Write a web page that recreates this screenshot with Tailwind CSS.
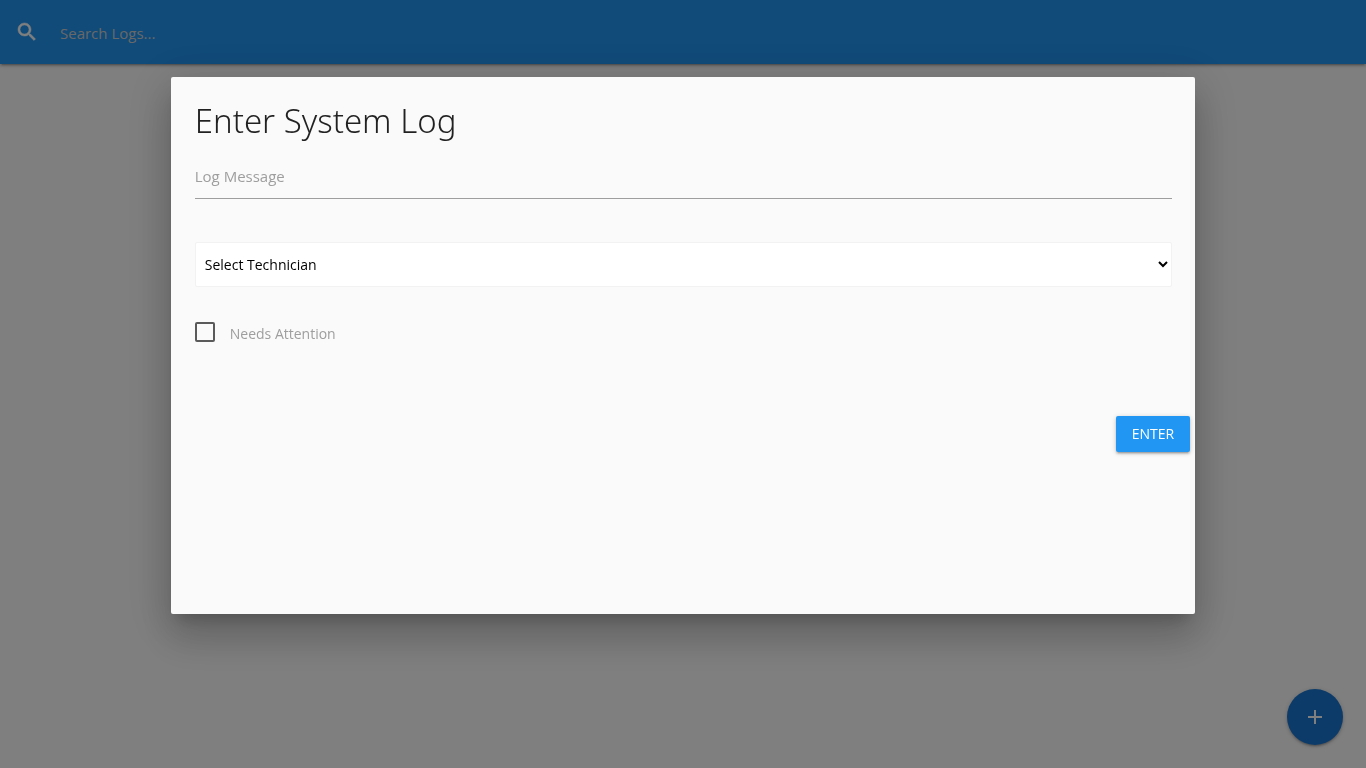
<!DOCTYPE html>
<html lang="en">
<head>
<meta charset="utf-8">
<meta name="viewport" content="width=device-width, initial-scale=1">
<title>System Logs</title>
<script src="https://cdn.jsdelivr.net/npm/@tailwindcss/browser@4"></script>
</head>
<body class="min-h-screen overflow-hidden bg-white font-['Segoe_UI','Open_Sans',sans-serif] text-sm text-black/87">
  <nav class="h-16 bg-[#2196f3] shadow-[0_2px_2px_0_rgba(0,0,0,0.14),0_3px_1px_-2px_rgba(0,0,0,0.12),0_1px_5px_0_rgba(0,0,0,0.2)]">
    <form class="flex h-full items-center gap-[21px] pl-[15px]">
      <label for="search" aria-label="Search" class="text-white">
        <svg class="size-6" viewBox="0 0 24 24" fill="currentColor" stroke="currentColor" stroke-width=".5"><path d="M15.5 14h-.79l-.28-.27C15.41 12.59 16 11.11 16 9.5 16 5.91 13.09 3 9.5 3S3 5.91 3 9.5 5.91 16 9.5 16c1.61 0 3.09-.59 4.23-1.57l.27.28v.79l5 4.99L20.49 19l-4.99-5zm-6 0C7.01 14 5 11.99 5 9.5S7.01 5 9.5 5 14 7.01 14 9.5 11.99 14 9.5 14z"/></svg>
      </label>
      <input id="search" type="search" placeholder="Search Logs..." class="h-full grow pt-0.5 text-[15px] text-white outline-none placeholder:text-[#d1d1d1]">
    </form>
  </nav>

  <button type="button" aria-label="Add log" class="fixed right-[23px] bottom-[23px] flex size-14 items-center justify-center rounded-full bg-[#1976d2] text-white shadow-[0_2px_2px_0_rgba(0,0,0,0.14),0_3px_1px_-2px_rgba(0,0,0,0.12),0_1px_5px_0_rgba(0,0,0,0.2)]">
    <svg class="size-6" viewBox="0 0 24 24" fill="currentColor"><path d="M19 13h-6v6h-2v-6H5v-2h6V5h2v6h6v2z"/></svg>
  </button>

  <div class="fixed inset-0 bg-black/50">
    <div role="dialog" aria-modal="true" aria-labelledby="title" class="absolute inset-x-0 top-[10%] mx-auto h-[70%] w-3/4 rounded-xs bg-[#fafafa] shadow-[0_24px_38px_3px_rgba(0,0,0,0.14),0_9px_46px_8px_rgba(0,0,0,0.12),0_11px_15px_-7px_rgba(0,0,0,0.2)]">
      <form>
        <div class="pt-6 pr-[23px] pl-6">
          <h4 id="title" class="font-['Segoe_UI','Noto_Sans','Open_Sans',sans-serif] text-[33px] leading-10 font-light">Enter System Log</h4>
          <div class="mt-3 grid h-[46px] border-b border-[#9e9e9e]">
            <input id="message" type="text" placeholder=" " class="peer col-start-1 row-start-1 w-full text-[15px] outline-none">
            <label for="message" class="pointer-events-none invisible col-start-1 row-start-1 self-center pt-0.5 text-[15px] leading-5 text-[#9e9e9e] peer-placeholder-shown:visible">Log Message</label>
          </div>
          <select id="tech" aria-label="Technician" class="mt-[43px] block h-[45px] w-full rounded-xs border border-[#f2f2f2] bg-white/90 p-[5px] text-sm text-black">
            <option>Select Technician</option>
          </select>
          <div class="mt-[33px] flex items-center gap-[15px]">
            <input id="attention" type="checkbox" class="size-5 appearance-none rounded-xs border-2 border-[#5a5a5a] checked:bg-[#2196f3]">
            <label for="attention" class="pt-1 leading-5 text-[#9e9e9e]">Needs Attention</label>
          </div>
        </div>
        <div class="flex justify-end pt-[72px] pr-[5px]">
          <button type="submit" class="h-9 rounded-xs bg-[#2196f3] px-4 text-sm text-white uppercase shadow-[0_2px_2px_0_rgba(0,0,0,0.14),0_3px_1px_-2px_rgba(0,0,0,0.12),0_1px_5px_0_rgba(0,0,0,0.2)]">Enter</button>
        </div>
      </form>
    </div>
  </div>
</body>
</html>
